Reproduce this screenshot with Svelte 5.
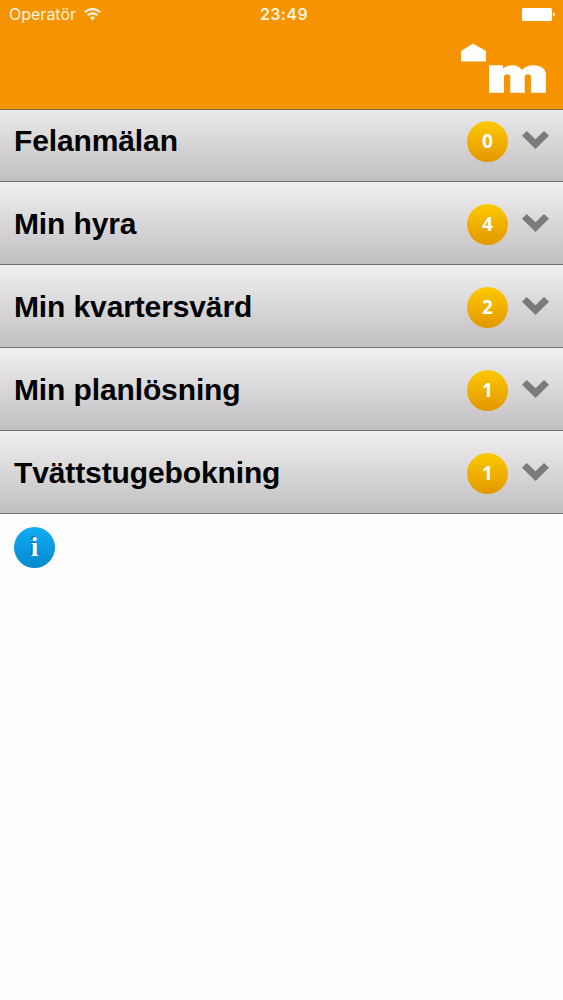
<script>
    let items = [
        { title: "Felanmälan", count: 0 },
        { title: "Min hyra", count: 4 },
        { title: "Min kvartersvärd", count: 2 },
        { title: "Min planlösning", count: 1 },
        { title: "Tvättstugebokning", count: 1 },
    ];
</script>

<div class="screen">
    <header class="header">
        <div class="status">
            <div class="carrier">
                <span>Operatör</span>
                <svg class="wifi" viewBox="0 0 17 13" width="17" height="13">
                    <path d="M1 4.3a10.5 10.5 0 0 1 15 0M3.7 7.3a6.8 6.8 0 0 1 9.6 0" />
                    <path class="dot" d="M5.9 9.6a3.8 3.8 0 0 1 5.2 0L8.5 12.4z" />
                </svg>
            </div>
            <span class="time">23:49</span>
            <svg class="battery" viewBox="0 0 33 13" width="33" height="13">
                <rect x="0" y="0" width="30" height="13" rx="1.5" />
                <path d="M31 4.3q2 .6 2 2.2t-2 2.2z" />
            </svg>
        </div>
        <svg class="logo" viewBox="0 0 88 52" width="88" height="52">
            <path d="M1 10L13 2.5 26 10V20.5H1z" />
            <text x="27" y="50.5" textLength="61" lengthAdjust="spacingAndGlyphs">m</text>
        </svg>
    </header>

    <ul class="list">
        {#each items as item}
            <li class="row">
                <span class="title">{item.title}</span>
                <span class="badge">{item.count}</span>
                <svg class="chevron" viewBox="0 0 27 18" width="27" height="18">
                    <path d="M0 4.8L4.7 0 13.5 8.2 22 0 27 4.8 13.5 18z" />
                </svg>
            </li>
        {/each}
    </ul>

    <button class="info" aria-label="Information">i</button>
</div>

<style>
    :global(body) {
        background: #fefefe;
    }

    .screen {
        min-height: 1000px;
        font-family: "Liberation Sans", Arial, sans-serif;
    }

    .header {
        position: relative;
        z-index: 1;
        box-sizing: border-box;
        height: 110px;
        display: flex;
        flex-direction: column;
        background: #f59300;
        border-bottom: 1px solid #7d6846;
        color: #fff4dc;
    }

    .status {
        display: grid;
        grid-template-columns: 1fr auto 1fr;
        align-items: center;
        height: 28px;
        padding: 0 8px 0 9px;
        font-family: Inter, sans-serif;
        font-size: 16px;
    }

    .carrier {
        display: flex;
        align-items: center;
        gap: 8px;
    }

    .wifi {
        fill: none;
        stroke: #fff4dc;
        stroke-width: 2.3;
    }

    .dot {
        fill: #fff4dc;
        stroke: none;
    }

    .time {
        padding-left: 4px;
        font-weight: 600;
        letter-spacing: 0.4px;
    }

    .battery {
        justify-self: end;
        fill: #fff;
    }

    .logo {
        align-self: flex-end;
        margin: 13px 15px 0 0;
        fill: #fff;
        overflow: visible;
    }

    .logo text {
        font-family: Inter, sans-serif;
        font-size: 47px;
        font-weight: 900;
        stroke: #fff;
        stroke-width: 1.6;
    }

    /* the first row slides partly under the header */
    .list {
        list-style: none;
        margin: -11px 0 0;
        padding: 0;
    }

    .row {
        box-sizing: border-box;
        height: 83px;
        display: flex;
        align-items: center;
        padding: 2px 14px 0;
        border-bottom: 1px solid #727072;
        background: linear-gradient(#f1f0f1, #c1bfc1);
    }

    .title {
        flex: 1;
        font-size: 30px;
        font-weight: bold;
        letter-spacing: -0.12px;
        color: #000;
    }

    .badge {
        display: flex;
        align-items: center;
        justify-content: center;
        width: 41px;
        height: 41px;
        margin-right: 14px;
        border-radius: 50%;
        background: linear-gradient(#fdc900, #e39700);
        color: #fff;
        font-family: "Open Sans", sans-serif;
        font-size: 19px;
        font-weight: bold;
    }

    .chevron {
        fill: #7c7a7c;
        margin-bottom: 2px;
    }

    .info {
        display: flex;
        align-items: center;
        justify-content: center;
        width: 41px;
        height: 41px;
        margin: 13px 14px;
        padding: 0;
        border: none;
        border-radius: 50%;
        background: linear-gradient(#10acf3, #0589cf);
        color: #fff;
        font-family: "Liberation Serif", serif;
        font-size: 27px;
        font-weight: bold;
        text-shadow: -1px -1px 0 #0a6298;
    }
</style>
